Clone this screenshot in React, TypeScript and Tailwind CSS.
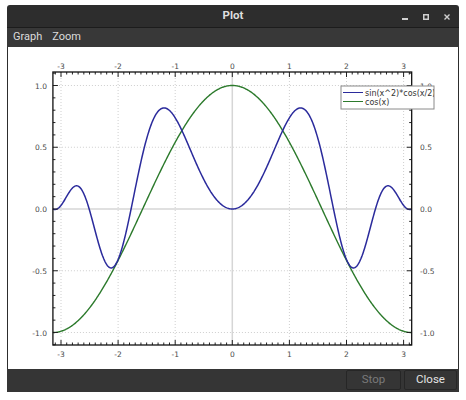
import React from "react";

const X0 = 232.3;
const KX = 57.1;
const Y0 = 210;
const KY = 123.5;
const TOP = 73;
const BOTTOM = 346;

const px = (x: number) => X0 + x * KX;
const py = (y: number) => Y0 - y * KY;
const LEFT = px(-Math.PI);
const RIGHT = px(Math.PI);

function curve(f: (x: number) => number) {
  const n = 600;
  const pts: string[] = [];
  for (let i = 0; i <= n; i++) {
    const x = -Math.PI + (2 * Math.PI * i) / n;
    pts.push(`${px(x).toFixed(2)},${py(f(x)).toFixed(2)}`);
  }
  return "M" + pts.join("L");
}

const xMajor = [-3, -2, -1, 0, 1, 2, 3];
const yMajor = [-1, -0.5, 0, 0.5, 1];
const xMinor = Array.from({ length: 63 }, (_, i) => -3.1 + i * 0.1);
const yMinor = Array.from({ length: 23 }, (_, i) => -1.1 + i * 0.1);

function PlotCanvas() {
  const label = { fontFamily: "'DejaVu Sans', sans-serif", fontSize: 7.5, fill: "#4a4a4a" };
  return (
    <svg viewBox="8 48 450 322" className="block h-[322px] w-[450px]">
      <defs>
        <clipPath id="legend-clip">
          <rect x={341} y={87} width={93} height={23} />
        </clipPath>
      </defs>
      {/* grid */}
      {xMajor
        .filter((v) => v !== 0)
        .map((v) => (
          <line key={"gx" + v} x1={px(v)} x2={px(v)} y1={TOP} y2={BOTTOM} stroke="#cfcfcf" strokeDasharray="1 2" />
        ))}
      {yMajor
        .filter((v) => v !== 0)
        .map((v) => (
          <line key={"gy" + v} x1={LEFT} x2={RIGHT} y1={py(v)} y2={py(v)} stroke="#cfcfcf" strokeDasharray="1 2" />
        ))}
      <line x1={px(0)} x2={px(0)} y1={TOP} y2={BOTTOM} stroke="#d6d6d6" strokeWidth={1.5} />
      <line x1={LEFT} x2={RIGHT} y1={py(0)} y2={py(0)} stroke="#d6d6d6" strokeWidth={1.5} />

      {/* curves */}
      <path d={curve((x) => Math.cos(x))} fill="none" stroke="#2c7a2c" strokeWidth={1.4} />
      <path d={curve((x) => Math.sin(x * x) * Math.cos(x / 2))} fill="none" stroke="#2b2b9c" strokeWidth={1.5} />

      {/* ticks */}
      {xMinor.map((v, i) => {
        const major = Math.abs(v - Math.round(v)) < 1e-6;
        const l = major ? 5 : 2.5;
        return (
          <g key={"tx" + i} stroke="#222" strokeWidth={1}>
            <line x1={px(v)} x2={px(v)} y1={TOP} y2={TOP + l} />
            <line x1={px(v)} x2={px(v)} y1={BOTTOM} y2={BOTTOM - l} />
          </g>
        );
      })}
      {yMinor.map((v, i) => {
        const major = Math.abs(v * 2 - Math.round(v * 2)) < 1e-6;
        const l = major ? 5 : 2.5;
        return (
          <g key={"ty" + i} stroke="#222" strokeWidth={1}>
            <line x1={LEFT} x2={LEFT + l} y1={py(v)} y2={py(v)} />
            <line x1={RIGHT} x2={RIGHT - l} y1={py(v)} y2={py(v)} />
          </g>
        );
      })}
      <rect x={LEFT} y={TOP} width={RIGHT - LEFT} height={BOTTOM - TOP} fill="none" stroke="#111" strokeWidth={1.3} />

      {/* labels */}
      {xMajor.map((v) => (
        <g key={"lx" + v} style={label} textAnchor="middle">
          <text x={px(v)} y={70}>{v}</text>
          <text x={px(v)} y={358}>{v}</text>
        </g>
      ))}
      {yMajor.map((v) => (
        <g key={"ly" + v} style={label}>
          <text x={47} y={py(v) + 3} textAnchor="end">{v.toFixed(1)}</text>
          <text x={420} y={py(v) + 3}>{v.toFixed(1)}</text>
        </g>
      ))}

      {/* legend */}
      <rect x={341} y={87} width={93} height={23} fill="#fff" stroke="#8a8a8a" strokeWidth={1} />
      <g clipPath="url(#legend-clip)">
        <line x1={343} x2={363} y1={93.5} y2={93.5} stroke="#2b2b9c" strokeWidth={1.2} />
        <line x1={343} x2={363} y1={102.5} y2={102.5} stroke="#2c7a2c" strokeWidth={1.2} />
        <text x={365} y={96.5} style={{ ...label, fontSize: 8, fill: "#333" }}>sin(x^2)*cos(x/2)</text>
        <text x={365} y={105.8} style={{ ...label, fontSize: 8, fill: "#333" }}>cos(x)</text>
      </g>
    </svg>
  );
}

export default function App() {
  return (
    <div className="min-h-[400px] bg-white pl-[7px] pt-[5px] font-['Roboto',sans-serif]">
      <div className="flex w-[452px] flex-col overflow-hidden rounded-t-[3px] bg-[#2d2d2d]">
        <div className="grid h-[23px] grid-cols-[1fr_auto_1fr] items-center border-b border-[#1c1c1c]">
          <div />
          <div className="text-[11.5px] font-bold text-[#dedede]">Plot</div>
          <div className="flex items-center justify-end gap-[15px] pr-[9px] pt-[1px]">
            <svg width="6" height="6" viewBox="0 0 6 6">
              <rect x="0" y="4" width="6" height="2" fill="#cfcfcf" />
            </svg>
            <svg width="6" height="6" viewBox="0 0 6 6">
              <rect x="0.75" y="0.75" width="4.5" height="4.5" fill="none" stroke="#cfcfcf" strokeWidth="1.5" />
            </svg>
            <svg width="6" height="6" viewBox="0 0 6 6">
              <path d="M0.5 0.5L5.5 5.5M5.5 0.5L0.5 5.5" stroke="#cfcfcf" strokeWidth="1.4" />
            </svg>
          </div>
        </div>
        <div className="flex h-[19px] items-center gap-[10px] bg-[#383838] px-[6px] text-[11px] text-[#dcdcdc]">
          <span>Graph</span>
          <span>Zoom</span>
        </div>
        <div className="mx-px bg-white">
          <PlotCanvas />
        </div>
        <div className="flex h-[23px] items-start justify-end gap-[3px] bg-[#353535] pr-[2px] pt-px">
          <button
            type="button"
            disabled
            className="h-[20px] w-[55px] rounded-[2px] border border-[#262626] bg-[#353535] text-[11.5px] text-[#7a7a7a]"
          >
            Stop
          </button>
          <button
            type="button"
            className="h-[20px] w-[53px] rounded-[2px] border border-[#262626] bg-[#353535] text-[11.5px] text-[#e4e4e4]"
          >
            Close
          </button>
        </div>
      </div>
    </div>
  );
}
